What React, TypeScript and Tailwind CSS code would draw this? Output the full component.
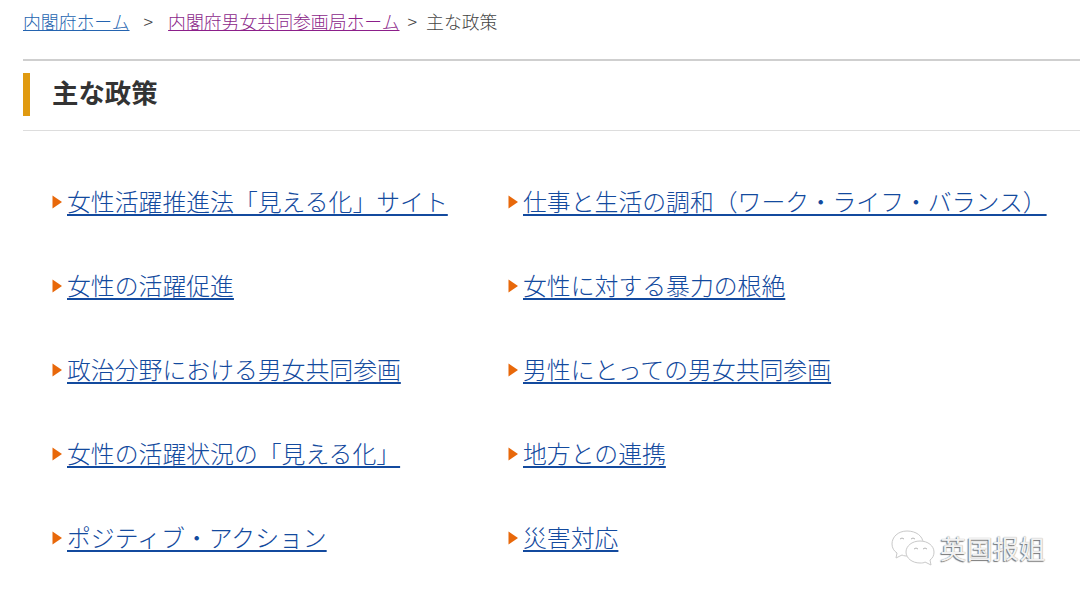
const rows = [
  ['女性活躍推進法「見える化」サイト', '仕事と生活の調和（ワーク・ライフ・バランス）'],
  ['女性の活躍促進', '女性に対する暴力の根絶'],
  ['政治分野における男女共同参画', '男性にとっての男女共同参画'],
  ['女性の活躍状況の「見える化」', '地方との連携'],
  ['ポジティブ・アクション', '災害対応'],
]

function PolicyLink({ label }: { label: string }) {
  return (
    <div className="flex items-center">
      <svg width="10" height="14" viewBox="0 0 10 14" className="mr-[5px] shrink-0">
        <path d="M0.5 0.5 L10 7 L0.5 13.5 Z" fill="#e8680a" />
      </svg>
      <a href="#" className="block pb-[2px] text-[23.85px] font-light leading-[32px] text-[#134a9e] underline decoration-[1.5px] underline-offset-[3px] whitespace-nowrap">
        {label}
      </a>
    </div>
  )
}

export default function App() {
  return (
    <div className="relative h-[597px] w-[1080px] overflow-hidden bg-white pl-[23px] font-['Noto_Sans_CJK_JP','Liberation_Sans',sans-serif] font-normal">
      <div className="flex h-[59px] items-start pt-[8px] text-[17.85px] font-light leading-[27px] text-[#444]">
        <a href="#" className="text-[#2464b0] underline">内閣府ホーム</a>
        <span className="ml-[14px] mr-[15px]">&gt;</span>
        <a href="#" className="text-[#8c1f8a] underline">内閣府男女共同参画局ホーム</a>
        <span className="ml-[8px] mr-[9px]">&gt;</span>
        <span>主な政策</span>
      </div>

      <div className="h-[72px] border-y-2 border-b border-t-[#cfcfcf] border-b-[#dddddd] py-3">
        <h1 className="flex h-[43px] items-center border-l-[7px] border-[#e09a10] pb-[5px] pl-[22px] text-[26.4px] font-bold text-[#333]">
          主な政策
        </h1>
      </div>

      <div className="grid grid-cols-[456px_1fr] gap-y-[50px] pl-[29px] pt-[54px]">
        {rows.map(([left, right]) => (
          <div key={left} className="contents">
            <PolicyLink label={left} />
            <PolicyLink label={right} />
          </div>
        ))}
      </div>

      {/* watermark over the content */}
      <div className="absolute left-[889px] top-[528px] flex items-center gap-[5px]">
        <svg width="46" height="40" viewBox="0 0 46 40" fill="#fff" stroke="#c9c9c9" strokeWidth="1">
          <path d="M18 3 C9 3 3 9 3 16 C3 20 5 23 8 25 L7 30 L13 27 C15 28 17 28 19 28 C29 28 34 22 34 15 C34 8 27 3 18 3 Z" />
          <path d="M31 13 C23 13 17 18 17 24 C17 30 23 35 31 35 C33 35 35 35 36 34 L42 37 L41 32 C44 30 45 27 45 24 C45 18 39 13 31 13 Z" />
          <path d="M11 11 Q13 9 15 11 M22 11 Q24 9 26 11 M25 21 Q27 19 29 21 M34 21 Q36 19 38 21" fill="none" stroke="#b5b5b5" />
        </svg>
        <span className="text-[26.4px] leading-none text-[#f2f2f2] [text-shadow:-1px_1px_1px_#777,0_0_1px_#888] font-['Noto_Sans_CJK_SC',sans-serif]">
          英国报姐
        </span>
      </div>
    </div>
  )
}
